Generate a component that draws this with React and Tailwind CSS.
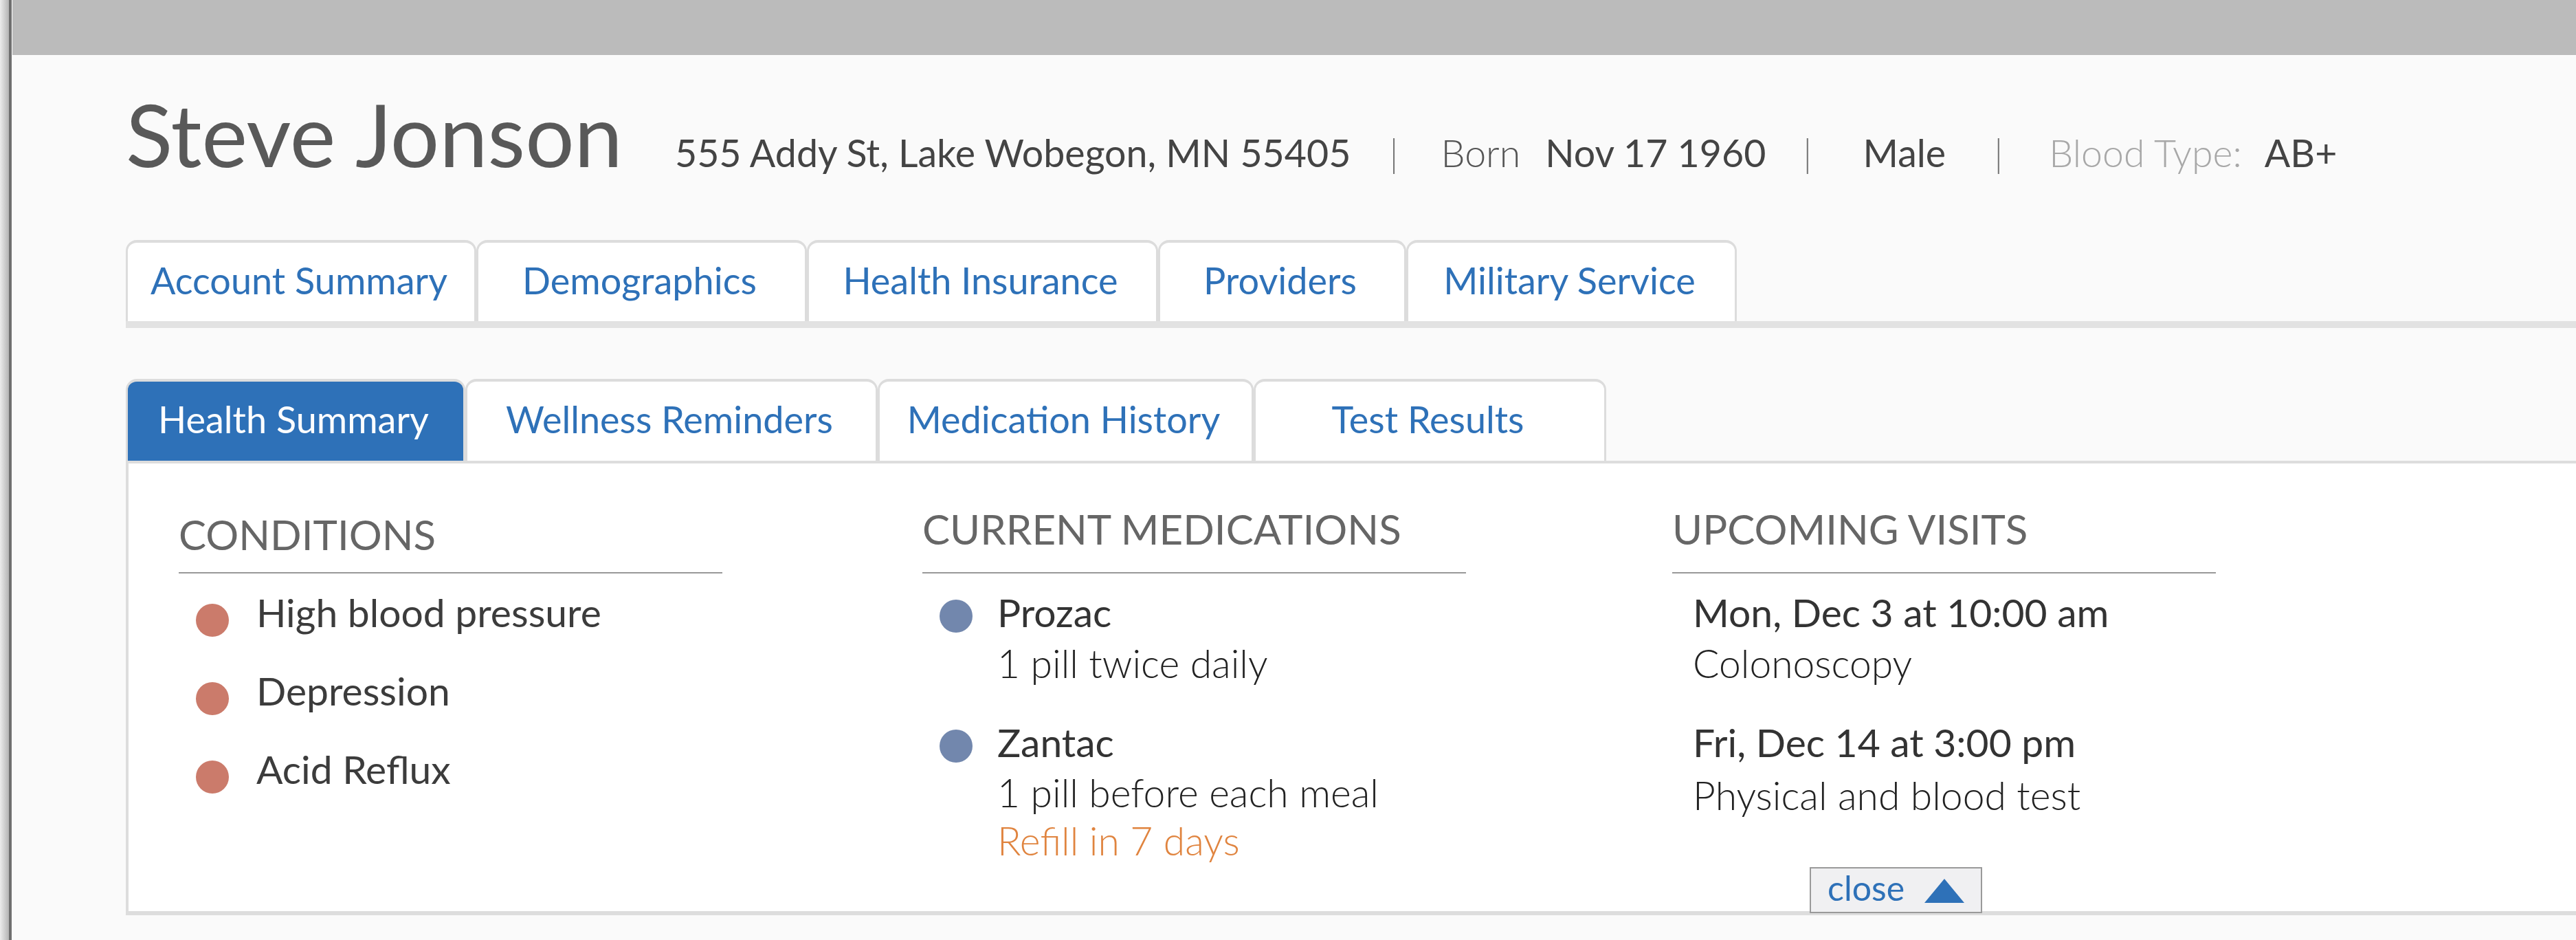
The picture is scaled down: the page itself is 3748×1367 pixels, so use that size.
const topTabs = [
  { label: 'Account Summary', width: 'w-[510px]' },
  { label: 'Demographics', width: 'w-[481px]' },
  { label: 'Health Insurance', width: 'w-[511px]' },
  { label: 'Providers', width: 'w-[361px]' },
  { label: 'Military Service', width: 'w-[481px]' },
];

const subTabs = [
  { label: 'Health Summary', width: 'w-[494px]', active: true },
  { label: 'Wellness Reminders', width: 'w-[600px]' },
  { label: 'Medication History', width: 'w-[547px]' },
  { label: 'Test Results', width: 'w-[513px]' },
];

const conditions = ['High blood pressure', 'Depression', 'Acid Reflux'];

function Tab({ label, width, active, height }) {
  const tone = active ? 'bg-[#2e71b8] text-white' : 'bg-white text-[#2e71b8]';
  return (
    <div
      className={`${width} ${height} ${tone} flex shrink-0 justify-center rounded-t-[16px] border-x-[3px] border-t-4 border-[#dcdcdc] pr-[6px] pt-[28px] text-[54px] leading-[54px] whitespace-nowrap`}
    >
      {label}
    </div>
  );
}

function Divider() {
  return <span className="text-[55px] leading-none font-light text-[#777]">|</span>;
}

function PatientHeader() {
  return (
    <div className="mt-[52px] flex items-baseline whitespace-nowrap text-[55.5px] leading-none text-[#444]">
      <h1 className="text-[126px] leading-none text-[#595959]">Steve Jonson</h1>
      <span className="ml-[76px]">555 Addy St, Lake Wobegon, MN 55405</span>
      <span className="ml-[56px]"><Divider /></span>
      <span className="ml-[62px] font-light text-[#555]">Born</span>
      <span className="ml-[36px]">Nov 17 1960</span>
      <span className="ml-[54px]"><Divider /></span>
      <span className="ml-[74px]">Male</span>
      <span className="ml-[70px]"><Divider /></span>
      <span className="ml-[67px] font-light text-[#a8a8a8]">Blood Type:</span>
      <span className="ml-[33px]">AB+</span>
    </div>
  );
}

function Heading({ children, extra }) {
  return (
    <h2 className={`${extra} border-b-2 border-[#999] text-[60px] leading-[60px] text-[#666] whitespace-nowrap`}>
      {children}
    </h2>
  );
}

function Dot({ color, offset }) {
  return <span className={`${color} ${offset} ml-[25px] h-[48px] w-[48px] shrink-0 rounded-full`} />;
}

function SummaryPanel() {
  return (
    <div className="flex items-start border-t-4 border-b-[6px] border-l-4 border-[#dddddd] bg-white pl-[73px] pt-[65px] text-[57px] leading-[57px] whitespace-nowrap">
      {/* conditions */}
      <div className="w-[791px] shrink-0">
        <Heading extra="mt-[8px] pb-[25px]">CONDITIONS</Heading>
        <div className="mt-[28px] flex flex-col gap-[50px]">
          {conditions.map((c) => (
            <div key={c} className="flex items-start">
              <Dot color="bg-[#cb7b6b]" offset="mt-[16px]" />
              <span className="ml-[40px] text-[#3c3c3c]">{c}</span>
            </div>
          ))}
        </div>
      </div>

      {/* medications */}
      <div className="ml-[291px] w-[791px] shrink-0">
        <Heading extra="pb-[33px]">CURRENT MEDICATIONS</Heading>
        <div className="mt-[28px] flex items-start">
          <Dot color="bg-[#7287ad]" offset="mt-[10px]" />
          <div className="ml-[36px] flex flex-col">
            <span className="text-[#333]">Prozac</span>
            <span className="mt-[17px] font-light text-[#222]">1 pill twice daily</span>
          </div>
        </div>
        <div className="mt-[58px] flex items-start">
          <Dot color="bg-[#7287ad]" offset="mt-[10px]" />
          <div className="ml-[36px] flex flex-col">
            <span className="text-[#333]">Zantac</span>
            <span className="mt-[16px] font-light text-[#222]">1 pill before each meal</span>
            <span className="mt-[13px] font-light text-[#e0843f]">Refill in 7 days</span>
          </div>
        </div>
      </div>

      {/* visits */}
      <div className="ml-[300px] w-[791px] shrink-0">
        <Heading extra="pb-[33px]">UPCOMING VISITS</Heading>
        <div className="mt-[28px] flex flex-col pl-[30px]">
          <span className="text-[#333]">Mon, Dec 3 at 10:00 am</span>
          <span className="mt-[17px] font-light text-[#222]">Colonoscopy</span>
          <span className="mt-[58px] text-[#333]">Fri, Dec 14 at 3:00 pm</span>
          <span className="mt-[20px] font-light text-[#222]">Physical and blood test</span>
        </div>
        <button className="relative ml-[200px] mt-[76px] -mb-[3px] flex h-[67px] w-[251px] items-start border-2 border-[#9a9a9a] bg-[#f0f0f2] pl-[24px] text-[50px] leading-[50px] text-[#2e71b8]">
          <span className="mt-[3px]">close</span>
          <svg className="ml-[29px] mt-[15px]" width="58" height="35" viewBox="0 0 58 35">
            <polygon points="29,0 58,35 0,35" fill="#2e71b8" />
          </svg>
        </button>
      </div>
    </div>
  );
}

export default function App() {
  return (
    <div className="flex h-[1367px] w-full overflow-hidden bg-[#fafafa] font-[Lato,sans-serif]">
      <div className="w-[13px] shrink-0 bg-linear-to-r from-[#ececec] to-[#b4b4b4]" />
      <div className="w-[4px] shrink-0 bg-[#6f6f6f]" />
      <div className="w-px shrink-0 bg-white" />
      <div className="flex min-w-0 flex-1 flex-col">
        <div className="h-[80px] shrink-0 bg-[#bbbbbb]" />
        <div className="flex flex-col pl-[165px]">
          <PatientHeader />

          <div className="mt-[91px] flex border-b-[10px] border-[#e2e2e2]">
            {topTabs.map((t) => (
              <Tab key={t.label} {...t} height="h-[118px]" />
            ))}
          </div>

          <div className="mt-[74px] flex">
            {subTabs.map((t) => (
              <Tab key={t.label} {...t} height="h-[119px]" />
            ))}
          </div>

          <SummaryPanel />
        </div>
      </div>
    </div>
  );
}
